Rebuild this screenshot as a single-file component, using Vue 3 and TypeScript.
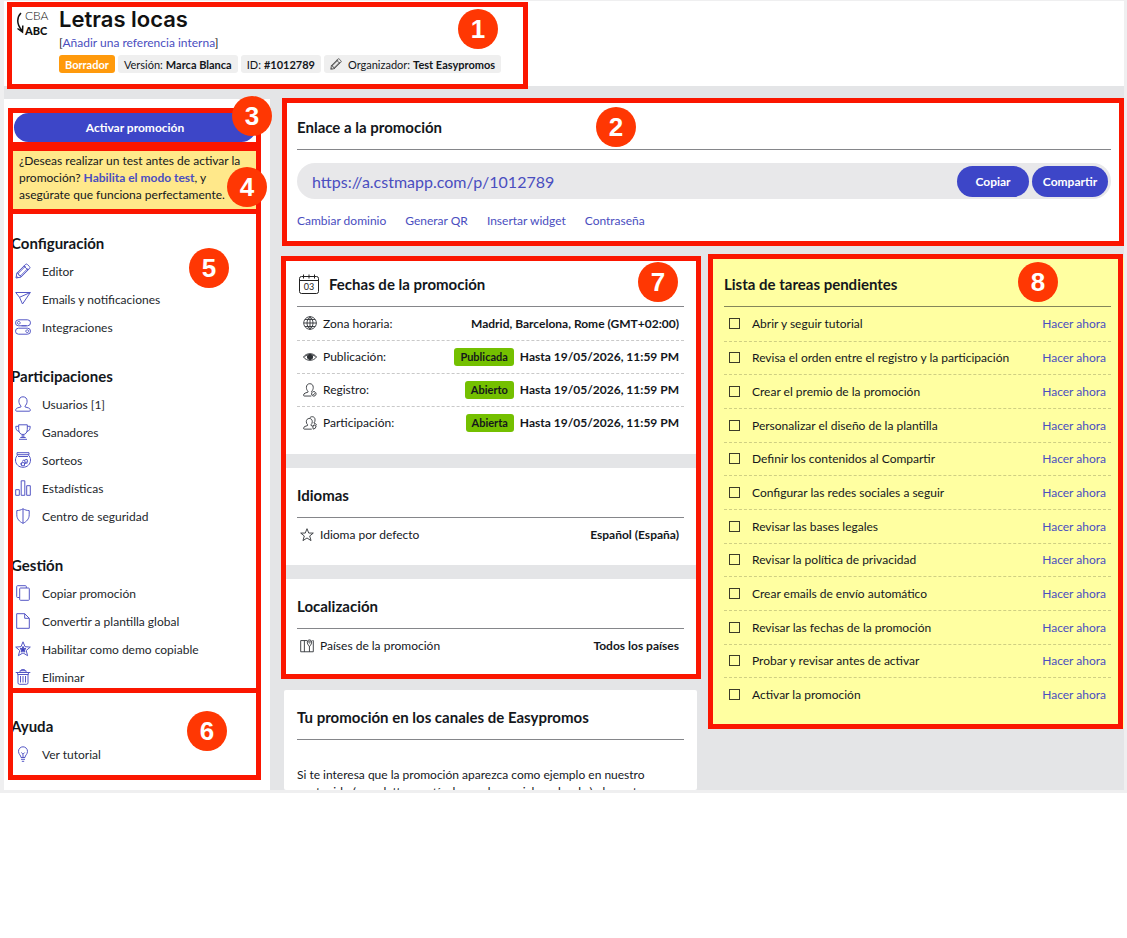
<script setup lang="ts">
import { ref } from 'vue'

interface Icon {
  lines: string
  solid?: string
}
interface MenuItem {
  label: string
  icon: string
}
interface MenuGroup {
  title: string
  items: MenuItem[]
}
interface DateRow {
  icon: string
  label: string
  status?: string
  value: string
}

const icons: Record<string, Icon> = {
  pencil: {
    lines:
      'M1 15l.9-5L10.400 1.500q1-1 2 0l2.100 2.100q1 1 0 2L6 14.100zM8.900 3l4.100 4.100M1.900 10l1.500.2.400 2 2 .4.200 1.500M3.400 10.200l7.300-7.300M5.800 12.600l7.300-7.300M1.400 13l1.600 1.600',
  },
  send: { lines: 'M.7 1.500h14.600L7.500 13 4.500 6.300zM4.500 6.300L15.300 1.500' },
  toggles: {
    lines:
      'M3.500.8h9a3 3 0 0 1 0 6h-9a3 3 0 0 1 0-6zM3.700 2.400a1.400 1.400 0 1 0 .1 0zM6.500 6.800h5M3.500 9.200h9a3 3 0 0 1 0 6h-9a3 3 0 0 1 0-6zM12.200 10.800a1.400 1.400 0 1 0 .1 0z',
  },
  user: {
    lines:
      'M8 .8c-2.600 0-4.100 1.800-4.100 4.300 0 2 .8 3.900 2.100 4.800v1L2.300 12C1.200 12.400.7 13.300.7 14.300q0 .9.900.9h12.800q.9 0 .9-.9c0-1-.5-1.900-1.600-2.300L10 10.900v-1c1.300-.9 2.100-2.800 2.100-4.800C12.100 2.600 10.600.8 8 .8z',
  },
  trophy: {
    lines:
      'M3.700.8h8.600v4.700c0 3-1.700 5-4.300 5s-4.300-2-4.300-5zM3.700 2.300H.8c0 3 .8 4.700 3.500 5.300M12.300 2.300h2.900c0 3-.8 4.700-3.500 5.300M7.200 10.500v3M8.800 10.500v3M5.300 13.500h5.400M4 15.300h8',
  },
  bowl: {
    lines:
      'M2 .7h12v2H2zM3 2.700C1.300 4.200.5 6 .5 8c0 4.300 3.300 7.300 7.500 7.300s7.500-3 7.500-7.300c0-2-.8-3.800-2.500-5.300M3 4.500h10M6.500 10.700h3v3h-3zM9.500 8l2.500-.7.7 2.500-2.500.7zM10 11.500l2.700-.7M7 9.500l2-1.700M5 12.300l1.300-1',
  },
  bars: { lines: 'M.7 9.700h3.600v5.600H.7zM6.200.8h3.600v14.500H6.200zM11.700 5.700h3.600v9.600h-3.600z' },
  shield: {
    lines: 'M8 .8C6 2 4 2.500 1.800 2.600v4.200c0 4 2.500 6.800 6.200 8.500 3.700-1.700 6.200-4.500 6.200-8.500V2.600C12 2.500 10 2 8 .8zM8 .8v14.500',
  },
  copy: { lines: 'M5.500 3h8q.8 0 .8.8v10.700q0 .8-.8.8h-8q-.8 0-.8-.8V3.800q0-.8.8-.8zM4.700 12.500H2.500q-.8 0-.8-.8V1.500q0-.8.8-.8h8q.8 0 .8.800V3' },
  file: { lines: 'M1.700.7h8l4.600 4.600v10H1.700zM9.700.7v4.600h4.600' },
  star: {
    lines: 'M8 .8l2 4.900 5.300.4-4.100 3.400 1.400 5.200L8 11.900l-4.600 2.800 1.400-5.200L.7 6.100 6 5.700z',
    solid: 'M8 5.400l.9 2 2.100.2-1.600 1.400.5 2.100L8 10l-1.900 1.100.5-2.100L5 7.600l2.100-.2z',
  },
  trash: {
    lines: 'M.7 3.500h14.600M5 3.500V1.700h6v1.800M6.500 1.700V.6h3v1.100M2.600 3.500v2h10.800v-2M3 5.500v8.300q0 1.500 1.500 1.500h7q1.500 0 1.500-1.500V5.500M5.500 7v6.500M8 7v6.500M10.500 7v6.500',
  },
  bulb: {
    lines:
      'M6 11.500C6 9.300 3.500 8.400 3.500 5.300a4.500 4.500 0 0 1 9 0c0 3.100-2.500 4-2.500 6.200zM6.300 6.500L8 8.200l1.700-1.700M8 8.200v3.300M6 13.300h4M6.800 15.300h2.400',
  },
  globe: {
    lines: 'M8 .8a7.200 7.200 0 1 0 .1 0zM8 .8v14.400M.8 8h14.400M8 .8C3.500 4 3.500 12 8 15.200M8 .8c4.500 3.200 4.500 11.200 0 14.400M2.300 4h11.400M2.300 12h11.400',
  },
  eye: {
    lines: 'M.5 8C4 2.900 12 2.900 15.500 8 12 13.100 4 13.100.5 8zM1.500 8C5 4.300 11 4.300 14.500 8M8 5a3 3 0 1 0 .1 0z',
    solid: 'M8 5.300a2.700 2.700 0 1 0 .1 0z',
  },
  userCheck: {
    lines:
      'M9.500 14.900H1.500Q.7 14.900.7 14c0-1.200.5-2 1.600-2.400L5.700 10.400v-1C4.600 8.500 3.900 6.900 3.900 5 3.900 2.500 5.400.8 7.800.8s3.900 1.700 3.900 4.200c0 1.900-.7 3.500-1.800 4.400v1M12.300 9.800a2.600 2.600 0 1 0 .1 0zM11 12.500l1 1 1.700-1.900',
  },
  userStar: {
    lines:
      'M10 15H1.500Q.7 15 .7 14.200c0-1.100.5-1.900 1.600-2.300l2.900-1v-1C4.300 9 3.800 8 3.800 6.500c0-2.300 1.400-3.700 3.400-3.700s3.400 1.400 3.400 3.700c0 1.500-.5 2.500-1.400 3.400v1l2.300.8M7.500 2.800C8 1.500 9 .8 10.500.8c2.200 0 3.300 1.500 3.300 3.700 0 1.500-.5 2.800-1.400 3.500l2.300 1.100q.8.500.6 1.500M12.500 10l2.500 1.500-1 2.500-2.300 1-.5-2.500z',
  },
  starThin: { lines: 'M8 .8l2 5h5.200l-4.100 3.300 1.500 5.300L8 11.400l-4.600 3 1.500-5.300L.8 5.800H6z' },
  map: {
    lines: 'M8 1.800H.8v12.800h14.400V1.800h-1M5 1.800v12.800M10.800 8.800v5.800M10.800 8.800C9 6.500 8.300 5 8.300 3.500a2.500 2.500 0 0 1 5 0c0 1.500-.7 3-2.500 5.300zM10.800 2.600a.9.900 0 1 0 .1 0z',
  },
}

const mainMenu: MenuGroup[] = [
  {
    title: 'Configuración',
    items: [
      { label: 'Editor', icon: 'pencil' },
      { label: 'Emails y notificaciones', icon: 'send' },
      { label: 'Integraciones', icon: 'toggles' },
    ],
  },
  {
    title: 'Participaciones',
    items: [
      { label: 'Usuarios [1]', icon: 'user' },
      { label: 'Ganadores', icon: 'trophy' },
      { label: 'Sorteos', icon: 'bowl' },
      { label: 'Estadísticas', icon: 'bars' },
      { label: 'Centro de seguridad', icon: 'shield' },
    ],
  },
  {
    title: 'Gestión',
    items: [
      { label: 'Copiar promoción', icon: 'copy' },
      { label: 'Convertir a plantilla global', icon: 'file' },
      { label: 'Habilitar como demo copiable', icon: 'star' },
      { label: 'Eliminar', icon: 'trash' },
    ],
  },
]

const linkActions = ['Cambiar dominio', 'Generar QR', 'Insertar widget', 'Contraseña']

const dateRows: DateRow[] = [
  { icon: 'globe', label: 'Zona horaria:', value: 'Madrid, Barcelona, Rome (GMT+02:00)' },
  { icon: 'eye', label: 'Publicación:', status: 'Publicada', value: 'Hasta 19/05/2026, 11:59 PM' },
  { icon: 'userCheck', label: 'Registro:', status: 'Abierto', value: 'Hasta 19/05/2026, 11:59 PM' },
  { icon: 'userStar', label: 'Participación:', status: 'Abierta', value: 'Hasta 19/05/2026, 11:59 PM' },
]

const tasks = ref(
  [
    'Abrir y seguir tutorial',
    'Revisa el orden entre el registro y la participación',
    'Crear el premio de la promoción',
    'Personalizar el diseño de la plantilla',
    'Definir los contenidos al Compartir',
    'Configurar las redes sociales a seguir',
    'Revisar las bases legales',
    'Revisar la política de privacidad',
    'Crear emails de envío automático',
    'Revisar las fechas de la promoción',
    'Probar y revisar antes de activar',
    'Activar la promoción',
  ].map((label) => ({ label, done: false })),
)
</script>

<template>
  <div class="frame">
    <header class="top">
      <svg class="logo" viewBox="0 0 34 34" aria-hidden="true">
        <text class="logo-thin" x="9" y="14">CBA</text>
        <text class="logo-bold" x="9" y="29">ABC</text>
        <path d="M5 7C1 11 0 18 6 24.500M1.500 22.500l5 3.500.3-6.500" fill="none" stroke="#111" stroke-width="1.500" />
      </svg>
      <div class="top-text">
        <h1>Letras locas</h1>
        <p class="reference">[<a href="#">Añadir una referencia interna</a>]</p>
        <div class="tags">
          <span class="tag draft">Borrador</span>
          <span class="tag">Versión: <b>Marca Blanca</b></span>
          <span class="tag">ID: <b>#1012789</b></span>
          <span class="tag">
            <svg class="tag-icon" viewBox="0 0 16 16"><path :d="icons.pencil.lines" /></svg>
            Organizador: <b>Test Easypromos</b>
          </span>
        </div>
      </div>
      <div class="callout c1"><span class="badge">1</span></div>
    </header>

    <div class="body">
      <aside class="side">
        <div class="activate">
          <button type="button" class="primary">Activar promoción</button>
          <div class="callout c3"><span class="badge">3</span></div>
        </div>
        <div class="notice">
          <p>
            ¿Deseas realizar un test antes de activar la promoción? <a href="#">Habilita el modo test</a>, y asegúrate
            que funciona perfectamente.
          </p>
          <div class="callout c4"><span class="badge">4</span></div>
        </div>
        <nav class="menu">
          <section v-for="group in mainMenu" :key="group.title" class="group">
            <h2>{{ group.title }}</h2>
            <a v-for="item in group.items" :key="item.label" href="#" class="item">
              <svg class="icon blue" viewBox="0 0 16 16">
                <path :d="icons[item.icon].lines" />
                <path v-if="icons[item.icon].solid" class="solid" :d="icons[item.icon].solid" />
              </svg>
              {{ item.label }}
            </a>
          </section>
          <div class="callout c5"><span class="badge">5</span></div>
        </nav>
        <nav class="help">
          <section class="group">
            <h2>Ayuda</h2>
            <a href="#" class="item">
              <svg class="icon blue" viewBox="0 0 16 16"><path :d="icons.bulb.lines" /></svg>
              Ver tutorial
            </a>
          </section>
          <div class="callout c6"><span class="badge">6</span></div>
        </nav>
      </aside>

      <main class="main">
        <section class="card link-card">
          <h3>Enlace a la promoción</h3>
          <div class="pill">
            <a href="#" class="url">https://a.cstmapp.com/p/1012789</a>
            <button type="button" class="primary small copy">Copiar</button>
            <button type="button" class="primary small share">Compartir</button>
          </div>
          <div class="actions">
            <a v-for="action in linkActions" :key="action" href="#">{{ action }}</a>
          </div>
          <div class="callout c2"><span class="badge">2</span></div>
        </section>

        <div class="columns">
          <div class="column">
            <div class="stack">
              <section class="card dates">
                <h3>
                  <svg class="calendar" viewBox="0 0 20 20">
                    <path d="M2.500 2.500h15q2 0 2 2v13q0 2-2 2h-15q-2 0-2-2v-13q0-2 2-2zM.5 6.500h19M4.500.5v4M10 .5v4M15.500.5v4" />
                    <text x="10" y="16">03</text>
                  </svg>
                  Fechas de la promoción
                </h3>
                <ul class="rows">
                  <li v-for="row in dateRows" :key="row.label">
                    <svg class="icon" viewBox="0 0 16 16">
                      <path :d="icons[row.icon].lines" />
                      <path v-if="icons[row.icon].solid" class="solid" :d="icons[row.icon].solid" />
                    </svg>
                    <span class="label">{{ row.label }}</span>
                    <span v-if="row.status" class="status">{{ row.status }}</span>
                    <b>{{ row.value }}</b>
                  </li>
                </ul>
              </section>
              <section class="card">
                <h3>Idiomas</h3>
                <ul class="rows single">
                  <li>
                    <svg class="icon" viewBox="0 0 16 16"><path :d="icons.starThin.lines" /></svg>
                    <span class="label">Idioma por defecto</span>
                    <b>Español (España)</b>
                  </li>
                </ul>
              </section>
              <section class="card">
                <h3>Localización</h3>
                <ul class="rows single">
                  <li>
                    <svg class="icon" viewBox="0 0 16 16"><path :d="icons.map.lines" /></svg>
                    <span class="label">Países de la promoción</span>
                    <b>Todos los países</b>
                  </li>
                </ul>
              </section>
              <div class="callout c7"><span class="badge">7</span></div>
            </div>
            <section class="card channels">
              <h3>Tu promoción en los canales de Easypromos</h3>
              <p>
                Si te interesa que la promoción aparezca como ejemplo en nuestro<br />
                contenido (newsletters, artículos, redes sociales, ebooks), danos tu
              </p>
            </section>
          </div>

          <section class="card todo">
            <h3>Lista de tareas pendientes</h3>
            <ul class="tasks">
              <li v-for="task in tasks" :key="task.label">
                <label><input v-model="task.done" type="checkbox" />{{ task.label }}</label>
                <a href="#">Hacer ahora</a>
              </li>
            </ul>
            <div class="callout c8"><span class="badge">8</span></div>
          </section>
        </div>
      </main>
    </div>
  </div>
</template>

<style>
body {
  margin: 0;
  background: #fff;
}
</style>

<style scoped>
* {
  box-sizing: border-box;
}
.frame {
  border: solid #efeff0;
  border-width: 1px 3px 3px 4px;
  background: #e4e5e7;
  color: #14171c;
  font-family: 'Lato', sans-serif;
  font-size: 12px;
  line-height: 17px;
  overflow: hidden;
}
h1,
h2,
h3,
p,
ul {
  margin: 0;
  padding: 0;
  list-style: none;
}
a {
  color: #4a4ec0;
  text-decoration: none;
}
button {
  font: inherit;
  cursor: pointer;
}
b {
  font-weight: 700;
}

/* Numbered highlights */
.callout {
  position: absolute;
  z-index: 2;
  border: 5px solid #fb1600;
  pointer-events: none;
}
.badge {
  position: absolute;
  width: 40px;
  height: 40px;
  border-radius: 50%;
  background: #ff3703;
  color: #fff;
  font: bold 26px/40px 'Liberation Sans', sans-serif;
  text-align: center;
}
.c1 { left: 3px; top: 1px; width: 521px; bottom: -3px; }
.c1 .badge { right: 25px; top: 2px; }
.c2 { inset: -2px 0 -3px -2px; }
.c2 .badge { left: 309px; top: 4px; }
.c3 { inset: 0; bottom: -1px; }
.c3 .badge { right: -16px; top: -17px; }
.c4 { inset: 0; bottom: -5px; }
.c4 .badge { right: -11px; top: 16px; z-index: 3; }
.c5 { inset: 0; bottom: -2px; }
.c5 .badge { right: 27px; top: 34px; }
.c6 { inset: -3px 0 0; }
.c6 .badge { right: 29px; top: 18px; }
.c7 { inset: -1px -4px -3px -3px; }
.c7 .badge { right: 18px; top: 1px; }
.c8 { inset: -3px 1px 0 -3px; }
.c8 .badge { right: 60px; top: 3px; }

/* Header */
.top {
  position: relative;
  display: flex;
  gap: 9px;
  height: 85px;
  padding: 5px 12px 0;
  background: #fff;
}
.logo {
  width: 34px;
  height: 34px;
}
.logo text {
  font-size: 12px;
  fill: #111;
}
.logo .logo-thin {
  font-weight: 300;
}
.logo .logo-bold {
  font-weight: 900;
  font-size: 11px;
}
h1 {
  font: 600 22px/26px 'Inter', sans-serif;
  color: #111;
}
.reference {
  margin-top: 2px;
}
.tags {
  display: flex;
  gap: 3px;
  margin-top: 4px;
}
.tag {
  display: flex;
  align-items: center;
  gap: 3px;
  height: 18px;
  padding: 0 6px;
  border-radius: 3px;
  background: #efefef;
  font-size: 11px;
}
.draft {
  background: #ff9a0c;
  color: #fff;
  font-weight: 700;
}
.tag-icon {
  width: 12px;
  height: 12px;
  margin-right: 3px;
  fill: none;
  stroke: #333;
}

/* Sidebar */
.body {
  display: flex;
  align-items: stretch;
  gap: 14px;
  padding-top: 13px;
}
.side {
  flex: 0 0 266px;
  padding: 9px 9px 10px 4px;
  background: #fff;
}
.activate,
.notice,
.menu,
.help {
  position: relative;
}
.activate {
  height: 38px;
  padding: 5px 5px 0 6px;
}
.activate .callout {
  z-index: 3;
}
.primary {
  border: 0;
  border-radius: 18px;
  background: #3d46c8;
  color: #fff;
  font-weight: 700;
}
.activate .primary {
  display: block;
  width: 100%;
  height: 29px;
}
.notice {
  padding: 5px 5px 0;
}
.notice p {
  padding: 1px 6px 6px;
  background: #ffe88a;
}
.notice a {
  font-weight: 700;
}
.menu {
  padding-top: 20px;
}
.help {
  padding: 21px 0 12px;
}
.group {
  padding-left: 3px;
}
.group + .group {
  margin-top: 21px;
}
h2 {
  font-size: 15px;
  line-height: 28px;
  font-weight: 700;
}
.item {
  display: flex;
  align-items: center;
  gap: 11px;
  height: 28px;
  padding-left: 4px;
  color: #24272c;
}
.icon {
  flex: none;
  width: 16px;
  height: 16px;
  fill: none;
  stroke: #2c2f33;
  stroke-width: 1;
}
.icon.blue {
  stroke: #5457c5;
}
.icon .solid {
  fill: #2c2f33;
}
.icon.blue .solid {
  fill: #3d42bd;
}

/* Main area */
.main {
  flex: 1;
  min-width: 0;
}
.card {
  padding: 0 13px;
  border-radius: 2px;
  background: #fff;
}
h3 {
  display: flex;
  align-items: center;
  gap: 10px;
  height: 50px;
  padding-top: 4px;
  border-bottom: 1px solid #85868a;
  font-size: 15px;
  line-height: 20px;
  font-weight: 700;
}
.link-card {
  position: relative;
  height: 143px;
  margin-top: 1px;
}
.pill {
  display: flex;
  align-items: center;
  gap: 3px;
  height: 36px;
  margin-top: 13px;
  padding: 0 3px 0 15px;
  border-radius: 18px;
  background: #e8e8ea;
}
.url {
  flex: 1;
  font-size: 16px;
}
.small {
  height: 31px;
  padding: 0;
}
.copy {
  width: 72px;
}
.share {
  width: 76px;
}
.actions {
  display: flex;
  gap: 19px;
  margin-top: 13px;
}
.columns {
  display: grid;
  grid-template-columns: 1fr 1fr;
  align-items: start;
  gap: 14px;
  margin-top: 14px;
}
.column,
.stack {
  display: grid;
  gap: 14px;
}
.stack {
  position: relative;
}
.stack .card {
  padding-bottom: 13px;
}
.stack .dates {
  padding-bottom: 15px;
}
.calendar {
  width: 20px;
  height: 20px;
  margin-left: 2px;
  fill: none;
  stroke: #222;
}
.calendar text {
  fill: #222;
  stroke: none;
  font-size: 9px;
  font-weight: 400;
  text-anchor: middle;
}
.rows li {
  display: flex;
  align-items: center;
  gap: 6px;
  height: 33px;
  padding: 0 5px 1px 6px;
}
.rows li + li {
  border-top: 1px dashed #c9c9c9;
}
.rows .label {
  flex: 1;
}
.rows .icon {
  width: 14px;
  height: 14px;
}
.single li {
  height: 34px;
  padding-left: 3px;
}
.status {
  height: 18px;
  padding: 0 6px;
  border-radius: 3px;
  background: #74c000;
  font-size: 11px;
  line-height: 18px;
  font-weight: 700;
}
.channels p {
  height: 50px;
  padding-top: 26px;
  overflow: hidden;
  white-space: nowrap;
}
.todo {
  position: relative;
  padding-bottom: 18px;
  background: #ffffa1;
}
.todo h3 {
  border-color: #85865a;
}
.tasks {
  display: grid;
  grid-auto-rows: 1fr;
  height: 404px;
}
.tasks li {
  display: flex;
  align-items: center;
  justify-content: space-between;
  padding: 0 5px;
}
.tasks li + li {
  border-top: 1px dashed #cfcf83;
}
.tasks label {
  display: flex;
  align-items: center;
  gap: 12px;
}
.tasks input {
  width: 11px;
  height: 11px;
  margin: 0;
  appearance: none;
  border: 1px solid #3c3c28;
}
.tasks input:checked {
  background: #3c3c28;
}
</style>
